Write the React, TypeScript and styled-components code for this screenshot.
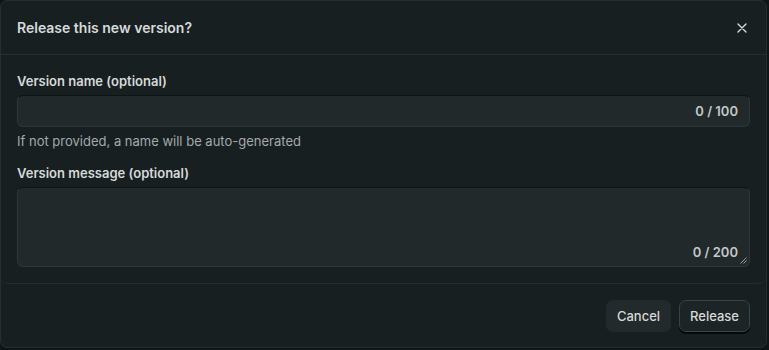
import styled, { createGlobalStyle } from "styled-components";

const GlobalStyle = createGlobalStyle`
  html, body {
    margin: 0;
    padding: 0;
    background: #0f1516;
  }
  body {
    font-family: Inter, "Liberation Sans", sans-serif;
  }
`;

export default function App() {
  return (
    <>
      <GlobalStyle />
      <Dialog>
        <Header>
          <Title>Release this new version?</Title>
          <CloseButton aria-label="Close">
            <svg width="10" height="10" viewBox="0 0 10 10">
              <path d="M1 1L9 9M9 1L1 9" stroke="#d6dada" strokeWidth="1.4" strokeLinecap="round" />
            </svg>
          </CloseButton>
        </Header>
        <Body>
          <Field>
            <Label>Version name (optional)</Label>
            <InputBox>
              <Counter>0 / 100</Counter>
            </InputBox>
            <Help>If not provided, a name will be auto-generated</Help>
          </Field>
          <Field>
            <Label>Version message (optional)</Label>
            <TextBox>
              <Counter>0 / 200</Counter>
              <Grip width="7" height="7" viewBox="0 0 7 7">
                <path d="M6.5 0.5L0.5 6.5M6.5 3.5L3.5 6.5" stroke="#9aa0a1" strokeWidth="1" />
              </Grip>
            </TextBox>
          </Field>
        </Body>
        <Footer>
          <Button>Cancel</Button>
          <Button $primary>Release</Button>
        </Footer>
      </Dialog>
    </>
  );
}

const Dialog = styled.div`
  width: 767px;
  height: 348px;
  box-sizing: border-box;
  background: #181f21;
  border: 1px solid #223032;
  border-radius: 7px;
  display: flex;
  flex-direction: column;
  color: #d5d9d9;
  overflow: hidden;
`;

const Header = styled.div`
  height: 54px;
  box-sizing: border-box;
  padding: 0 16px;
  display: flex;
  align-items: center;
  justify-content: space-between;
  border-bottom: 1px solid #223033;
`;

const Title = styled.h2`
  margin: 0;
  font-size: 14px;
  font-weight: 600;
  color: #d6dada;
`;

const CloseButton = styled.button`
  background: none;
  border: none;
  padding: 4px;
  margin-right: -1px;
  display: flex;
  cursor: pointer;
`;

const Body = styled.div`
  padding: 18px 16px 16px;
  display: flex;
  flex-direction: column;
  gap: 16px;
  border-bottom: 1px solid #222b2d;
  border-radius: 0 0 7px 7px;
`;

const Field = styled.div`
  display: flex;
  flex-direction: column;
`;

const Label = styled.label`
  font-size: 13px;
  font-weight: 600;
  color: #d5d9d9;
  margin-bottom: 6px;
  line-height: 16px;
`;

const InputBox = styled.div`
  height: 32px;
  box-sizing: border-box;
  background: #22292b;
  border: 1px solid #2f3739;
  border-top-color: #0e1314;
  border-radius: 6px;
  display: flex;
  align-items: center;
  justify-content: flex-end;
  padding: 0 11px;
`;

const TextBox = styled.div`
  position: relative;
  height: 80px;
  box-sizing: border-box;
  background: #22292b;
  border: 1px solid #2f3739;
  border-top-color: #0e1314;
  border-radius: 6px;
  display: flex;
  align-items: flex-end;
  justify-content: flex-end;
  padding: 0 11px 6px;
`;

const Counter = styled.span`
  font-size: 13px;
  font-weight: 600;
  color: #c2c7c8;
`;

const Grip = styled.svg`
  position: absolute;
  right: 2px;
  bottom: 2px;
`;

const Help = styled.p`
  margin: 6px 0 0;
  font-size: 13px;
  color: #a3a9aa;
  line-height: 16px;
`;

const Footer = styled.div`
  flex: 1;
  display: flex;
  align-items: center;
  justify-content: flex-end;
  gap: 8px;
  padding: 0 16px;
`;

const Button = styled.button<{ $primary?: boolean }>`
  height: 32px;
  padding: 0 10px;
  font-family: inherit;
  font-size: 13px;
  font-weight: 500;
  color: #d5d9d9;
  border-radius: 7px;
  cursor: pointer;
  background: ${(p) => (p.$primary ? "#1d2426" : "#222a2c")};
  border: 1px solid ${(p) => (p.$primary ? "#3a4244" : "transparent")};
  box-shadow: ${(p) => (p.$primary ? "0 2px 0 #050808" : "none")};
`;
